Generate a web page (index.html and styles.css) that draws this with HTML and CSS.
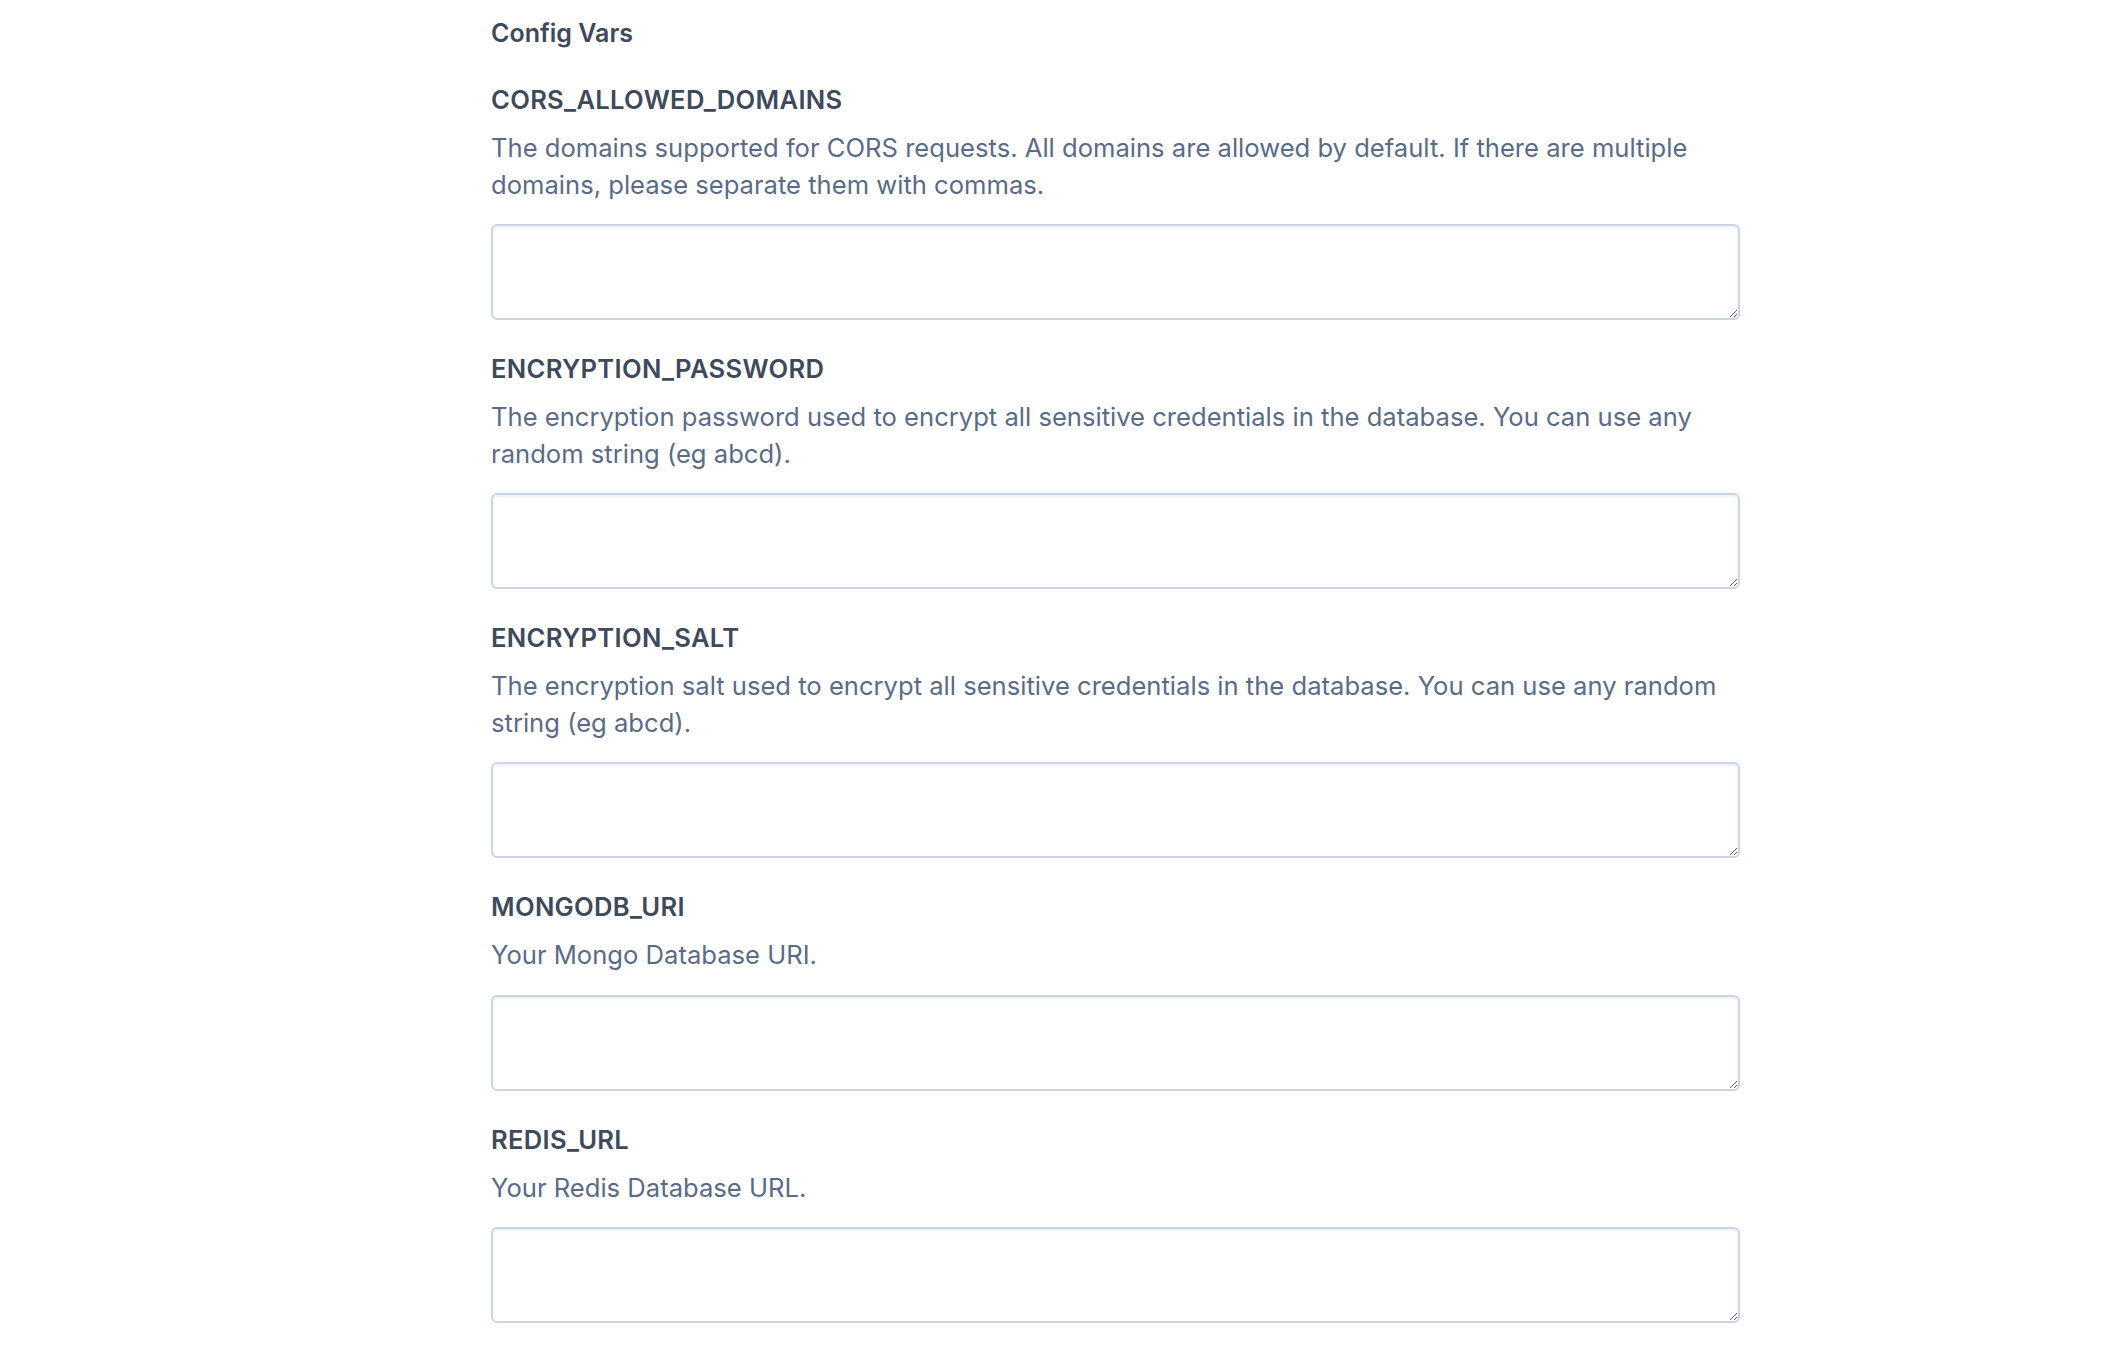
FILE: index.html
```html
<!DOCTYPE html>
<html lang="en">
<head>
<meta charset="utf-8">
<title>Config Vars</title>
<link rel="stylesheet" href="styles.css">
</head>
<body>
<main class="config">
  <h2 class="config-title">Config Vars</h2>
  <div class="var">
    <h3 class="var-name">CORS_ALLOWED_DOMAINS</h3>
    <p class="var-desc">The domains supported for CORS requests. All domains are allowed by default. If there are multiple domains, please separate them with commas.</p>
    <textarea class="var-input"></textarea>
  </div>
  <div class="var">
    <h3 class="var-name">ENCRYPTION_PASSWORD</h3>
    <p class="var-desc">The encryption password used to encrypt all sensitive credentials in the database. You can use any random string (eg abcd).</p>
    <textarea class="var-input"></textarea>
  </div>
  <div class="var">
    <h3 class="var-name">ENCRYPTION_SALT</h3>
    <p class="var-desc">The encryption salt used to encrypt all sensitive credentials in the database. You can use any random string (eg abcd).</p>
    <textarea class="var-input"></textarea>
  </div>
  <div class="var">
    <h3 class="var-name">MONGODB_URI</h3>
    <p class="var-desc">Your Mongo Database URI.</p>
    <textarea class="var-input"></textarea>
  </div>
  <div class="var">
    <h3 class="var-name">REDIS_URL</h3>
    <p class="var-desc">Your Redis Database URL.</p>
    <textarea class="var-input"></textarea>
  </div>
</main>
</body>
</html>
```
FILE: styles.css
```css
html, body {
  margin: 0;
  padding: 0;
  background: #ffffff;
}
body {
  font-family: "Inter", "Lato", sans-serif;
  color: #3e4a5c;
}
.config {
  width: 1249px;
  margin-left: 491px;
  padding-top: 15px;
  display: flex;
  flex-direction: column;
  gap: 31px;
}
.config-title {
  margin: 0;
  font-size: 25px;
  line-height: 36px;
  font-weight: 600;
  color: #3e4a5c;
}
.var {
  display: flex;
  flex-direction: column;
}
.var-name {
  margin: 0;
  font-size: 25.6px;
  line-height: 36px;
  font-weight: 600;
  letter-spacing: 0.3px;
  color: #3e4a5c;
}
.var-desc {
  margin: 12px 0 0;
  max-width: 1235px;
  font-size: 25.6px;
  line-height: 36.5px;
  font-weight: 400;
  color: #5a6b88;
}
.var-input {
  margin: 21px 0 0;
  box-sizing: border-box;
  width: 100%;
  height: 96px;
  border: 2px solid #cbd5e6;
  border-radius: 6px;
  box-shadow: inset 0 2px 3px rgba(200, 212, 230, 0.35);
  background: #ffffff;
  font-family: inherit;
  font-size: 24px;
  padding: 8px 12px;
  resize: vertical;
}
```
